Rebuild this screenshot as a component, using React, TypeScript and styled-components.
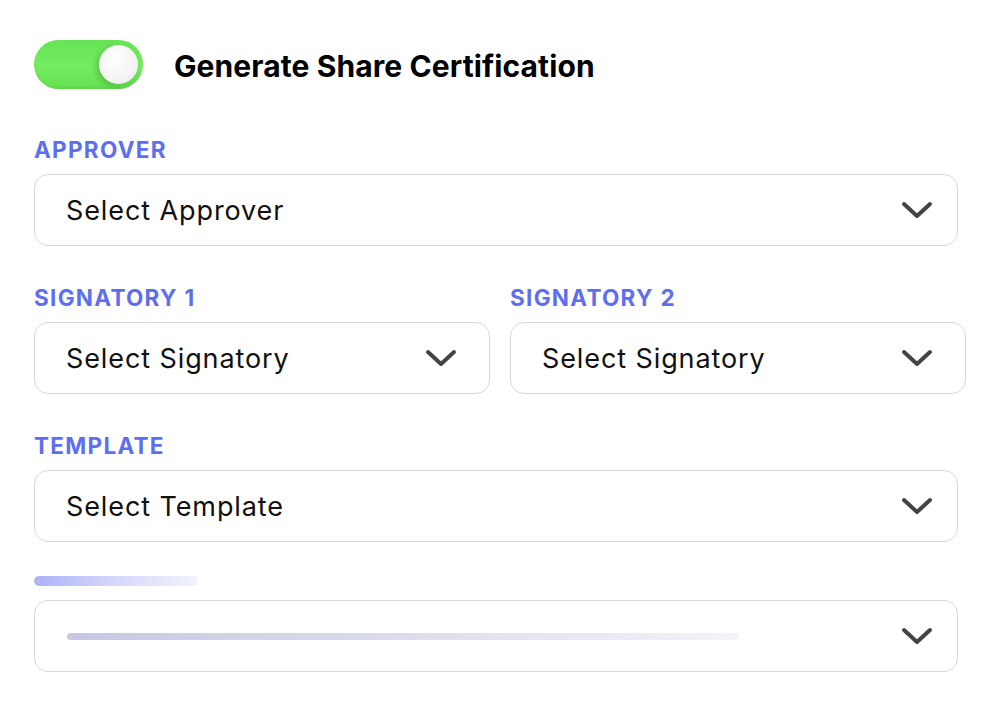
import { FC } from "react";
import styled, { createGlobalStyle } from "styled-components";

const GlobalStyle = createGlobalStyle`
  html, body {
    margin: 0;
    padding: 0;
    background: #ffffff;
    font-family: "Inter", "Liberation Sans", sans-serif;
  }
`;

const Page = styled.div`
  width: 1002px;
  height: 706px;
  box-sizing: border-box;
  padding: 40px 36px 0 34px;
  display: flex;
  flex-direction: column;
`;

const Header = styled.div`
  display: flex;
  align-items: center;
  gap: 31px;
  margin-bottom: 49px;
`;

const Toggle = styled.div`
  position: relative;
  width: 109px;
  height: 49px;
  border-radius: 25px;
  background: linear-gradient(180deg, #66e454 0%, #74ec60 55%, #64e050 100%);
  box-shadow: inset 0 -2px 3px rgba(0, 0, 0, 0.05);
  flex-shrink: 0;
`;

const Knob = styled.div`
  position: absolute;
  top: 5px;
  right: 5px;
  width: 39px;
  height: 39px;
  border-radius: 50%;
  background: radial-gradient(circle at 40% 35%, #ffffff 0%, #f4f4f4 60%, #e4e4e4 100%);
  box-shadow: -3px 2px 6px rgba(0, 0, 0, 0.18);
`;

const Title = styled.h1`
  margin: 2px 0 0;
  font-size: 30px;
  font-weight: 700;
  color: #000000;
  letter-spacing: 0.1px;
`;

const Field = styled.div<{ $tight?: boolean }>`
  display: flex;
  flex-direction: column;
  gap: ${({ $tight }) => ($tight ? "14px" : "12px")};
  flex: 1;
`;

const Label = styled.div`
  font-size: 22.5px;
  line-height: 24px;
  height: 24px;
  font-weight: 700;
  color: #5d6ff0;
  letter-spacing: 1.3px;
  white-space: nowrap;
`;

const LabelBar = styled.div`
  width: 164px;
  height: 10px;
  border-radius: 5px;
  background: linear-gradient(90deg, #adb2f8 0%, #d6d8fb 50%, #f3f3fd 100%);
`;

const Row = styled.div<{ $full?: boolean; $gapBelow?: number }>`
  display: flex;
  gap: 20px;
  width: ${({ $full }) => ($full ? "924px" : "932px")};
  margin-bottom: ${({ $gapBelow }) => $gapBelow ?? 40}px;
`;

const SelectBox = styled.div<{ $narrow?: boolean }>`
  height: 72px;
  box-sizing: border-box;
  border: 1px solid #d8d8d8;
  border-radius: 14px;
  display: flex;
  align-items: center;
  justify-content: space-between;
  padding: 0 ${({ $narrow }) => ($narrow ? "32px" : "24px")} 0 31px;
  background: #ffffff;
`;

const Placeholder = styled.span`
  font-size: 27px;
  color: #111111;
  letter-spacing: 0.9px;
`;

const TextBar = styled.div`
  width: 672px;
  height: 7px;
  margin-left: 1px;
  border-radius: 4px;
  background: linear-gradient(90deg, #c7c7e2 0%, #dcdcee 50%, #f3f3f9 100%);
`;

const Chevron: FC = () => (
  <svg width="32" height="20" viewBox="0 0 32 20" fill="none">
    <path
      d="M3 4 L16 16 L29 4"
      stroke="#444444"
      strokeWidth="4"
      strokeLinecap="round"
      strokeLinejoin="round"
    />
  </svg>
);

interface SelectProps {
  label: string;
  placeholder: string;
  narrow?: boolean;
}

const Select: FC<SelectProps> = ({ label, placeholder, narrow }) => (
  <Field>
    <Label>{label}</Label>
    <SelectBox $narrow={narrow}>
      <Placeholder>{placeholder}</Placeholder>
      <Chevron />
    </SelectBox>
  </Field>
);

const App: FC = () => (
  <>
    <GlobalStyle />
    <Page>
      <Header>
        <Toggle>
          <Knob />
        </Toggle>
        <Title>Generate Share Certification</Title>
      </Header>
      <Row $full>
        <Select label="APPROVER" placeholder="Select Approver" />
      </Row>
      <Row>
        <Select label="SIGNATORY 1" placeholder="Select Signatory" narrow />
        <Select label="SIGNATORY 2" placeholder="Select Signatory" narrow />
      </Row>
      <Row $full $gapBelow={34}>
        <Select label="TEMPLATE" placeholder="Select Template" />
      </Row>
      <Row $full>
        <Field $tight>
          <LabelBar />
          <SelectBox>
            <TextBar />
            <Chevron />
          </SelectBox>
        </Field>
      </Row>
    </Page>
  </>
);

export default App;
